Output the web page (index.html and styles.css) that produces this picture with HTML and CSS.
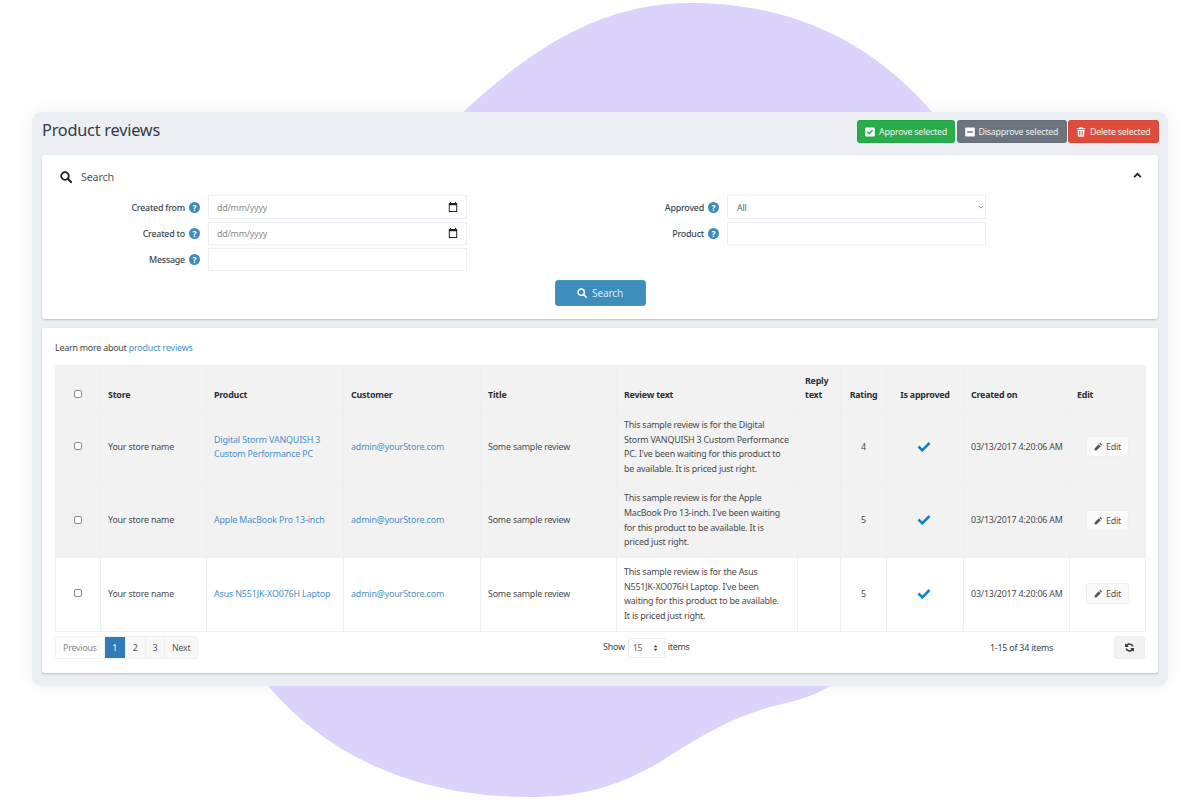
FILE: index.html
```html
<!DOCTYPE html>
<html lang="en">
<head>
<meta charset="utf-8">
<title>Product reviews</title>
<link rel="stylesheet" href="styles.css">
</head>
<body>
<svg class="blob" width="1200" height="800" viewBox="0 0 1200 800" aria-hidden="true"><path d="M463 112C530 50 600 3 690 3C790 3 870 40 932 112L830 686C815 695 800 700 786 703C745 712 710 730 671 755C620 788 580 797 529 797C430 797 335 765 268 686Z"/></svg>
<div class="frame">
<main class="panel">
  <header class="panel-head">
    <h1>Product reviews</h1>
    <div class="actions">
      <button class="btn green"><svg viewBox="0 0 10 10"><path fill-rule="evenodd" d="M1.2 0.6h7.6a1 1 0 0 1 1 1v7a1 1 0 0 1-1 1H1.2a1 1 0 0 1-1-1v-7a1 1 0 0 1 1-1zM4.2 7.6l3.9-3.9-1-1-2.9 2.9-1.3-1.3-1 1z"/></svg>Approve selected</button>
      <button class="btn grey"><svg viewBox="0 0 10 10"><path fill-rule="evenodd" d="M1.2 0.6h7.6a1 1 0 0 1 1 1v7a1 1 0 0 1-1 1H1.2a1 1 0 0 1-1-1v-7a1 1 0 0 1 1-1zM2.2 4.2v1.6h5.6V4.2z"/></svg>Disapprove selected</button>
      <button class="btn red"><svg viewBox="0 0 10 10"><path fill-rule="evenodd" d="M3.6.3h2.8l.5 1h2.2v1H.9v-1h2.2zM1.5 2.9h7l-.4 6.2a.7.7 0 0 1-.7.6H2.6a.7.7 0 0 1-.7-.6zM3.1 4v4.6h.7V4zM4.65 4v4.6h.7V4zM6.2 4v4.6h.7V4z"/></svg>Delete selected</button>
    </div>
  </header>

  <section class="card search-card">
    <div class="search-head">
      <svg class="ico-search" viewBox="0 0 12 12"><circle cx="5" cy="5" r="3.8" fill="none" stroke="currentColor" stroke-width="1.8"/><path d="M7.8 7.8l3.2 3.2" stroke="currentColor" stroke-width="2.1" stroke-linecap="round"/></svg>
      <span class="search-title">Search</span>
      <svg class="ico-chev" viewBox="0 0 10 7"><path d="M1.2 5.4L5 1.6l3.8 3.8" fill="none" stroke="currentColor" stroke-width="2"/></svg>
    </div>
    <div class="form">
      <div class="form-col">
        <div class="form-row"><label class="lbl">Created from<i class="help">?</i></label><div class="field muted"><span>dd/mm/yyyy</span><svg class="ico-cal" viewBox="0 0 10 10"><path fill-rule="evenodd" d="M2 0h1v1h4V0h1v1h1.2v9H.8V1H2zM1.8 3.2v5.8h6.4V3.2z"/></svg></div></div>
        <div class="form-row"><label class="lbl">Created to<i class="help">?</i></label><div class="field muted"><span>dd/mm/yyyy</span><svg class="ico-cal" viewBox="0 0 10 10"><path fill-rule="evenodd" d="M2 0h1v1h4V0h1v1h1.2v9H.8V1H2zM1.8 3.2v5.8h6.4V3.2z"/></svg></div></div>
        <div class="form-row"><label class="lbl">Message<i class="help">?</i></label><div class="field"></div></div>
      </div>
      <div class="form-col">
        <div class="form-row"><label class="lbl">Approved<i class="help">?</i></label><div class="field select-field"><span>All</span><svg class="ico-down" viewBox="0 0 8 5"><path d="M1 1l3 3 3-3" fill="none" stroke="currentColor" stroke-width="1"/></svg></div></div>
        <div class="form-row"><label class="lbl">Product<i class="help">?</i></label><div class="field"></div></div>
      </div>
    </div>
    <div class="search-submit">
      <button class="btn-search"><svg viewBox="0 0 12 12"><circle cx="5" cy="5" r="3.8" fill="none" stroke="currentColor" stroke-width="1.8"/><path d="M7.8 7.8l3.2 3.2" stroke="currentColor" stroke-width="2.1" stroke-linecap="round"/></svg>Search</button>
    </div>
  </section>

  <section class="card table-card">
    <p class="learn">Learn more about <a href="#">product reviews</a></p>
    <table class="grid">
      <colgroup><col class="c1"><col class="c2"><col class="c3"><col class="c4"><col class="c5"><col class="c6"><col class="c7"><col class="c8"><col class="c9"><col class="c10"><col class="c11"></colgroup>
      <thead>
        <tr><th class="ctr"><input class="chk" type="checkbox"></th><th>Store</th><th>Product</th><th>Customer</th><th>Title</th><th>Review text</th><th>Reply text</th><th class="ctr">Rating</th><th class="ctr">Is approved</th><th>Created on</th><th>Edit</th></tr>
      </thead>
      <tbody>
        <tr class="shade">
          <td class="ctr"><input class="chk" type="checkbox"></td><td>Your store name</td><td><a href="#">Digital Storm VANQUISH 3<br>Custom Performance PC</a></td><td><a href="#">admin@yourStore.com</a></td><td>Some sample review</td>
          <td class="review">This sample review is for the Digital<br>Storm VANQUISH 3 Custom Performance<br>PC. I've been waiting for this product to<br>be available. It is priced just right.</td><td></td><td class="ctr">4</td>
          <td class="ctr"><svg class="ico-check" viewBox="0 0 14 11"><path d="M1.500 5.500l3.800 3.800L12.500 2" fill="none" stroke="currentColor" stroke-width="2.6"/></svg></td><td class="date">03/13/2017 4:20:06 AM</td>
          <td class="ctr"><button class="btn-edit"><svg viewBox="0 0 10 10"><path d="M7 .9l2.100 2.100-1 1L6 1.900zM5.400 2.500l2.100 2.100L3 9.100.6 9.400.9 7z"/></svg>Edit</button></td>
        </tr>
        <tr class="shade">
          <td class="ctr"><input class="chk" type="checkbox"></td><td>Your store name</td><td><a href="#">Apple MacBook Pro 13-inch</a></td><td><a href="#">admin@yourStore.com</a></td><td>Some sample review</td>
          <td class="review">This sample review is for the Apple<br>MacBook Pro 13-inch. I've been waiting<br>for this product to be available. It is<br>priced just right.</td><td></td><td class="ctr">5</td>
          <td class="ctr"><svg class="ico-check" viewBox="0 0 14 11"><path d="M1.500 5.500l3.800 3.800L12.500 2" fill="none" stroke="currentColor" stroke-width="2.6"/></svg></td><td class="date">03/13/2017 4:20:06 AM</td>
          <td class="ctr"><button class="btn-edit"><svg viewBox="0 0 10 10"><path d="M7 .9l2.100 2.100-1 1L6 1.900zM5.400 2.500l2.100 2.100L3 9.100.6 9.400.9 7z"/></svg>Edit</button></td>
        </tr>
        <tr>
          <td class="ctr"><input class="chk" type="checkbox"></td><td>Your store name</td><td><a href="#">Asus N551JK-XO076H Laptop</a></td><td><a href="#">admin@yourStore.com</a></td><td>Some sample review</td>
          <td class="review">This sample review is for the Asus<br>N551JK-XO076H Laptop. I've been<br>waiting for this product to be available.<br>It is priced just right.</td><td></td><td class="ctr">5</td>
          <td class="ctr"><svg class="ico-check" viewBox="0 0 14 11"><path d="M1.500 5.500l3.800 3.800L12.500 2" fill="none" stroke="currentColor" stroke-width="2.6"/></svg></td><td class="date">03/13/2017 4:20:06 AM</td>
          <td class="ctr"><button class="btn-edit"><svg viewBox="0 0 10 10"><path d="M7 .9l2.100 2.100-1 1L6 1.900zM5.400 2.500l2.100 2.100L3 9.100.6 9.400.9 7z"/></svg>Edit</button></td>
        </tr>
      </tbody>
    </table>
    <div class="grid-foot">
      <nav class="pager-wrap"><div class="pager"><span class="pg prev">Previous</span><span class="pg cur">1</span><span class="pg">2</span><span class="pg">3</span><span class="pg">Next</span></div></nav>
      <div class="show">Show<span class="size"><span>15</span><svg viewBox="0 0 6 9"><path d="M3 .8L5.200 3.500H.8zM3 8.200L.8 5.500h4.400z"/></svg></span>items</div>
      <div class="info">1-15 of 34 items</div>
      <button class="refresh"><svg viewBox="0 0 12 12"><path d="M10.400 4.900A4.600 4.600 0 0 0 2.600 2.800L1.200 1.400v4.100h4.100L3.900 4.100a2.800 2.800 0 0 1 4.800.8zM1.600 7.100a4.600 4.600 0 0 0 7.800 2.100l1.400 1.400V6.500H6.700l1.400 1.400a2.800 2.800 0 0 1-4.800-.8z"/></svg></button>
    </div>
  </section>
</main>
</div>
</body>
</html>
```
FILE: styles.css
```css
* { box-sizing: border-box; }
html, body { margin: 0; height: 800px; overflow: hidden; background: #fff; }
body { padding: 112px 32px 0; font-family: "Noto Sans", "Open Sans", sans-serif; font-size: 8.9px; letter-spacing: -.22px; color: #444; }
a { color: #4a90c2; text-decoration: none; letter-spacing: -.14px; }
button { font-family: inherit; letter-spacing: inherit; cursor: pointer; }

.blob { position: absolute; left: 0; top: 0; z-index: 1; }
.blob path { fill: #dbd3fb; }

.frame { height: 574px; border-radius: 9px; box-shadow: 0 0 16px 3px rgba(170, 180, 200, .12); }
.panel { position: relative; z-index: 2; height: 574px; padding: 0 10px; background: #ebeef3; border-radius: 9px; }

.panel-head { height: 43px; display: flex; align-items: flex-start; justify-content: space-between; }
.panel-head h1 { margin: 8px 0 0; font-size: 16.3px; line-height: 20px; font-weight: 400; color: #333c48; }
.actions { display: flex; gap: 1.5px; margin: 8px -1px 0 0; }
.btn { height: 23px; display: flex; align-items: center; gap: 4px; padding: 0 7px; border: 1px solid rgba(0, 0, 0, .05); border-radius: 3px; color: #e8f3ee; font-size: 8.9px; white-space: nowrap; }
.btn svg { width: 10px; height: 10px; fill: #fff; flex: none; }
.green { width: 98px; background: #29ad4b; }
.grey { width: 110px; background: #6c7480; }
.red { width: 91px; background: #e04c3b; }

.card { background: #fff; border-radius: 3px; box-shadow: 0 1px 2px rgba(60, 70, 90, .28); }
.search-card { height: 164px; }
.search-head { height: 40px; padding: 4px 16px 0 18px; display: flex; align-items: center; color: #1d2531; }
.ico-search { width: 12px; height: 12px; }
.search-title { margin: -1px 0 0 9px; font-size: 10.8px; color: #555; }
.ico-chev { width: 9px; height: 7px; margin-left: auto; margin-top: -3px; }

.form { display: flex; gap: 94px; padding-top: .3px; }
.form-col { display: flex; flex-direction: column; gap: 2.8px; }
.form-row { display: grid; grid-template-columns: 166px 259px; align-items: center; }
.lbl { display: flex; justify-content: flex-end; align-items: center; gap: 4px; padding-right: 8px; font-weight: 500; color: #3d4650; }
.help { width: 11px; height: 11px; border-radius: 50%; background: #3c8dbc; color: #fff; font-size: 8.5px; line-height: 11px; font-style: normal; font-weight: 700; text-align: center; letter-spacing: 0; }
.field { height: 23.5px; padding: 0 7px 0 8px; border: 1px solid #eceef3; display: flex; align-items: center; justify-content: space-between; color: #666; }
.muted { color: #8a8a8a; }
.select-field { padding: 0 1px 0 9px; }
.ico-cal { width: 10px; height: 10px; fill: #222; margin-right: 1px; }
.ico-down { width: 6px; height: 4px; color: #555; }

.search-submit { display: flex; justify-content: center; margin-top: 9px; }
.btn-search { width: 91px; height: 26px; display: flex; align-items: center; justify-content: center; gap: 5px; background: #3c8dbc; border: 1px solid #4a97c4; border-radius: 3px; color: #d7e9f3; font-size: 10.2px; }
.btn-search svg { width: 10px; height: 10px; color: #fff; }

.table-card { height: 345px; margin-top: 9px; padding: 0 13px; }
.learn { margin: 0; height: 37px; padding-top: 13px; line-height: 14px; color: #444; }

.grid { width: 1090px; table-layout: fixed; border-collapse: collapse; line-height: 14.7px; }
.c1 { width: 45px; } .c2 { width: 106px; } .c3 { width: 137px; } .c4 { width: 137px; } .c5 { width: 136px; } .c6 { width: 181px; } .c7 { width: 43px; } .c8 { width: 46px; } .c9 { width: 77px; } .c10 { width: 106px; } .c11 { width: 76px; }
.grid th, .grid td { padding: 0 7px; border: 1px solid #eeeff1; text-align: left; }
.grid th { height: 45px; vertical-align: bottom; padding-bottom: 7px; background: #f2f2f3; color: #2c3036; font-weight: 700; }
.grid td { height: 73.5px; vertical-align: middle; color: #4a4a4a; letter-spacing: -.19px; }
.grid .ctr { text-align: center; }
.grid .review { white-space: nowrap; }
.grid .date { white-space: nowrap; padding-right: 0; }
.shade td { background: #f2f2f3; }
.chk { appearance: none; display: inline-block; vertical-align: middle; width: 8px; height: 8px; margin: 0 0 3px; border: 1px solid #8b8b8b; border-radius: 2px; background: #fff; }
.ico-check { width: 14px; height: 11px; margin: 0 2px 3px 0; color: #0b81cf; display: inline-block; vertical-align: middle; }
.btn-edit { width: 43px; height: 21px; margin-bottom: 1px; display: inline-flex; align-items: center; justify-content: center; gap: 3px; padding: 0; background: #fafafa; border: 1px solid #efefef; border-radius: 3px; color: #555; font-size: 8.9px; }
.btn-edit svg { width: 9px; height: 9px; fill: #555; }

.grid-foot { display: flex; align-items: flex-start; margin-top: 4px; }
.pager-wrap { width: 548px; }
.pager { display: inline-flex; height: 23px; border: 1px solid #f0f0f0; border-radius: 3px; overflow: hidden; background: #f8f8f8; color: #555; }
.pg { display: flex; align-items: center; padding: 0 7px; border-right: 1px solid #f0f0f0; }
.pg:last-child { border-right: 0; padding: 0 6.5px; }
.prev { background: #fff; color: #888; }
.cur { background: #337ab7; color: #fff; padding: 0 7.5px; }
.show { width: 387px; height: 21px; display: flex; align-items: center; gap: 3px; color: #444; }
.size { width: 37px; height: 20px; margin-top: 3px; padding: 0 6px 0 4px; border: 1px solid #eceef3; display: flex; align-items: center; justify-content: space-between; color: #666; }
.size svg { width: 5px; height: 8px; fill: #444; }
.info { flex: 1; height: 23px; padding-top: 5px; line-height: 14px; color: #444; }
.refresh { width: 31px; height: 23px; display: flex; align-items: center; justify-content: center; background: #f2f2f3; border: 1px solid #eeeeee; border-radius: 3px; padding: 0; }
.refresh svg { width: 11px; height: 11px; fill: #333; }
```
